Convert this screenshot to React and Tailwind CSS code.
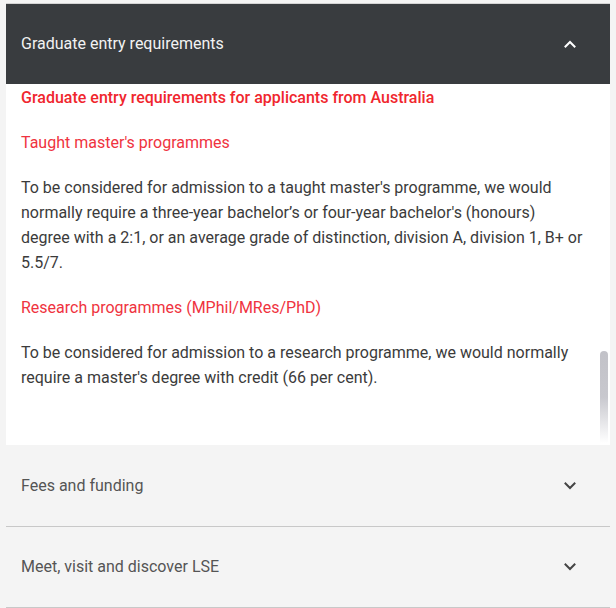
export default function App() {
  const Chevron = ({ up, color }) => (
    <svg width="12" height="8" viewBox="0 0 12 8" fill="none" className="shrink-0">
      <path
        d={up ? "M1.5 6.5 L6 2 L10.5 6.5" : "M1.5 1.5 L6 6 L10.5 1.5"}
        stroke={color}
        strokeWidth="2"
        strokeLinecap="square"
      />
    </svg>
  );
  return (
    <div className="min-h-[608px] w-[616px] bg-[#f4f4f4] px-[6px] pt-[3px] font-['Roboto','Liberation_Sans',sans-serif]">
      <div className="border-t border-[#d4d4d4]">
        <div className="flex h-[80px] items-center justify-between bg-[#393c3f] pl-[15px] pr-[34px]">
          <span className="text-[16px] text-[#f2f2f2]">Graduate entry requirements</span>
          <Chevron up color="#ffffff" />
        </div>
        <div className="relative h-[361px] overflow-hidden bg-white pl-[15px] pr-[24px] pt-[1px] text-[16px] leading-[25px]">
          <p className="font-medium text-[#f0262e]">Graduate entry requirements for applicants from Australia</p>
          <p className="mt-[20px] text-[#ef3340]">Taught master's programmes</p>
          <p className="mt-[20px] text-[#3b3b3b]">
            To be considered for admission to a taught master's programme, we would normally require a three-year bachelor’s or four-year bachelor's (honours) degree with a 2:1, or an average grade of distinction, division A, division 1, B+ or 5.5/7.
          </p>
          <p className="mt-[20px] text-[#ef3340]">Research programmes (MPhil/MRes/PhD)</p>
          <p className="mt-[20px] text-[#3b3b3b]">
            To be considered for admission to a research programme, we would normally require a master's degree with credit (66 per cent).
          </p>
          <div className="absolute right-[2px] top-[267px] h-[92px] w-[8px] rounded-t-full bg-gradient-to-b from-[#c2c2c8] via-[#c8c8ce] to-[#ffffff]" />
        </div>
        <div className="flex h-[82px] items-center justify-between border-b border-[#c8c8c8] pl-[15px] pr-[34px]">
          <span className="text-[16px] text-[#555555]">Fees and funding</span>
          <Chevron color="#444444" />
        </div>
        <div className="flex h-[81px] items-center justify-between border-b border-[#c8c8c8] pl-[15px] pr-[34px]">
          <span className="text-[16px] text-[#555555]">Meet, visit and discover LSE</span>
          <Chevron color="#444444" />
        </div>
      </div>
    </div>
  );
}
